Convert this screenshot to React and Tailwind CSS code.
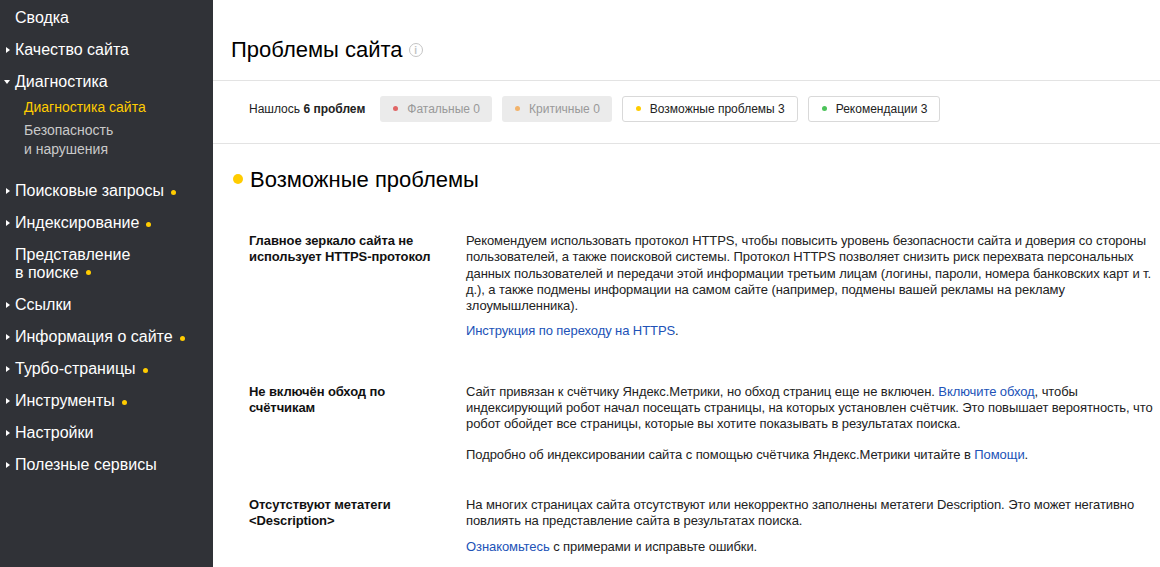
import React from "react";

const Dot = ({ className = "" }) => <span className={`inline-block rounded-full ${className}`} />;

const Arrow = ({ open }) =>
  open ? (
    <span className="absolute left-[4px] top-1/2 -translate-y-1/2 w-0 h-0 border-l-[3px] border-r-[3px] border-t-[4px] border-l-transparent border-r-transparent border-t-white" />
  ) : (
    <span className="absolute left-[6px] top-1/2 -translate-y-1/2 w-0 h-0 border-t-[3px] border-b-[3px] border-l-[4px] border-t-transparent border-b-transparent border-l-white" />
  );

const NavItem = ({ children, arrow, open, dot }) => (
  <div className="relative h-8 flex items-center pl-[15px] text-[16px] text-white">
    {arrow && <Arrow open={open} />}
    <span>{children}</span>
    {dot && <Dot className="w-[5px] h-[5px] bg-[#ffcc00] ml-[7px] mt-[2px]" />}
  </div>
);

const Sidebar = () => (
  <aside className="w-[213px] shrink-0 bg-[#303237] min-h-[567px] pt-[2px]">
    <NavItem>Сводка</NavItem>
    <NavItem arrow>Качество сайта</NavItem>
    <NavItem arrow open>Диагностика</NavItem>
    <div className="pl-[24px] text-[14px] pb-[16px]">
      <div className="leading-[18px] text-[#ffcc00]">Диагностика сайта</div>
      <div className="leading-[19px] mt-[5px] text-[#c9c9c9]">
        Безопасность
        <br />и нарушения
      </div>
    </div>
    <NavItem arrow dot>Поисковые запросы</NavItem>
    <NavItem arrow dot>Индексирование</NavItem>
    <div className="pl-[15px] py-[7px] text-[16px] leading-[18px] text-white">
      Представление
      <br />в поиске
      <Dot className="w-[5px] h-[5px] bg-[#ffcc00] ml-[7px] mb-[2px] align-middle" />
    </div>
    <NavItem arrow>Ссылки</NavItem>
    <NavItem arrow dot>Информация о сайте</NavItem>
    <NavItem arrow dot>Турбо-страницы</NavItem>
    <NavItem arrow dot>Инструменты</NavItem>
    <NavItem arrow>Настройки</NavItem>
    <NavItem arrow>Полезные сервисы</NavItem>
  </aside>
);

const Chip = ({ dot, label, count, active }) => (
  <div
    className={`h-[26px] flex items-center pl-[13px] pr-[12px] rounded-[3px] text-[12px] ${
      active ? "bg-white border border-[#d9d9d9] text-[#222]" : "bg-[#ebebeb] text-[#999]"
    }`}
  >
    <Dot className={`w-[5px] h-[5px] mr-[9px] ${dot}`} />
    <span>
      {label} {count}
    </span>
  </div>
);

const Link = ({ children }) => <a className="text-[#2152b7] cursor-pointer">{children}</a>;

const Problem = ({ title, children, className = "" }) => (
  <div className={`flex ${className}`}>
    <div className="w-[217px] shrink-0 text-[13px] font-bold leading-[16px] text-[#111] tracking-[-0.1px]">{title}</div>
    <div className="flex-1 text-[13px] leading-[16.3px] text-[#222] tracking-[-0.08px]">{children}</div>
  </div>
);

export default function App() {
  return (
    <div className="flex w-[1160px] h-[567px] overflow-hidden bg-white" style={{ fontFamily: '"Liberation Sans", Arial, sans-serif' }}>
      <Sidebar />
      <main className="flex-1 min-w-0">
        <header className="h-[81px] border-b border-[#e3e3e3] flex items-center pl-[18px] pt-[18px]">
          <h1 className="text-[22px] text-[#000]">Проблемы сайта</h1>
          <span className="ml-[6px] mt-[2px] w-[14px] h-[14px] rounded-full border-[1.5px] border-[#c4c4c4] text-[#c4c4c4] text-[10px] leading-[11px] font-bold flex items-center justify-center">
            i
          </span>
        </header>
        <div className="h-[63px] border-b border-[#e3e3e3] flex items-center pl-[36px] pb-[7px] gap-[10px]">
          <div className="text-[12px] text-[#222] mr-[5px]">
            Нашлось <b>6 проблем</b>
          </div>
          <Chip dot="bg-[#e06666]" label="Фатальные" count="0" />
          <Chip dot="bg-[#f2b36b]" label="Критичные" count="0" />
          <Chip dot="bg-[#ffcc00]" label="Возможные проблемы" count="3" active />
          <Chip dot="bg-[#4cc35a]" label="Рекомендации" count="3" active />
        </div>
        <section className="pl-[20px] pt-[22px]">
          <div className="flex items-center">
            <Dot className="w-[10px] h-[10px] bg-[#ffcc00] mb-[3px]" />
            <h2 className="ml-[7px] text-[22px] leading-[28px] text-[#000]">Возможные проблемы</h2>
          </div>
        </section>
        <div className="pl-[36px] pt-[39px]">
          <Problem title={<>Главное зеркало сайта не<br />использует HTTPS-протокол</>}>
            <p>
              Рекомендуем использовать протокол HTTPS, чтобы повысить уровень безопасности сайта и доверия со стороны
              пользователей, а также поисковой системы. Протокол HTTPS позволяет снизить риск перехвата персональных
              данных пользователей и передачи этой информации третьим лицам (логины, пароли, номера банковских карт и т.
              д.), а также подмены информации на самом сайте (например, подмены вашей рекламы на рекламу
              злоумышленника).
            </p>
            <p className="mt-[9px]">
              <Link>Инструкция по переходу на HTTPS</Link>.
            </p>
          </Problem>
          <Problem className="mt-[44px]" title={<>Не включён обход по<br />счётчикам</>}>
            <p>
              Сайт привязан к счётчику Яндекс.Метрики, но обход страниц еще не включен. <Link>Включите обход</Link>, чтобы
              индексирующий робот начал посещать страницы, на которых установлен счётчик. Это повышает вероятность, что
              робот обойдет все страницы, которые вы хотите показывать в результатах поиска.
            </p>
            <p className="mt-[14px]">
              Подробно об индексировании сайта с помощью счётчика Яндекс.Метрики читайте в <Link>Помощи</Link>.
            </p>
          </Problem>
          <Problem className="mt-[34px]" title={<>Отсутствуют метатеги<br />&lt;Description&gt;</>}>
            <p>
              На многих страницах сайта отсутствуют или некорректно заполнены метатеги Description. Это может негативно
              повлиять на представление сайта в результатах поиска.
            </p>
            <p className="mt-[9px]">
              <Link>Ознакомьтесь</Link> с примерами и исправьте ошибки.
            </p>
          </Problem>
        </div>
      </main>
    </div>
  );
}
